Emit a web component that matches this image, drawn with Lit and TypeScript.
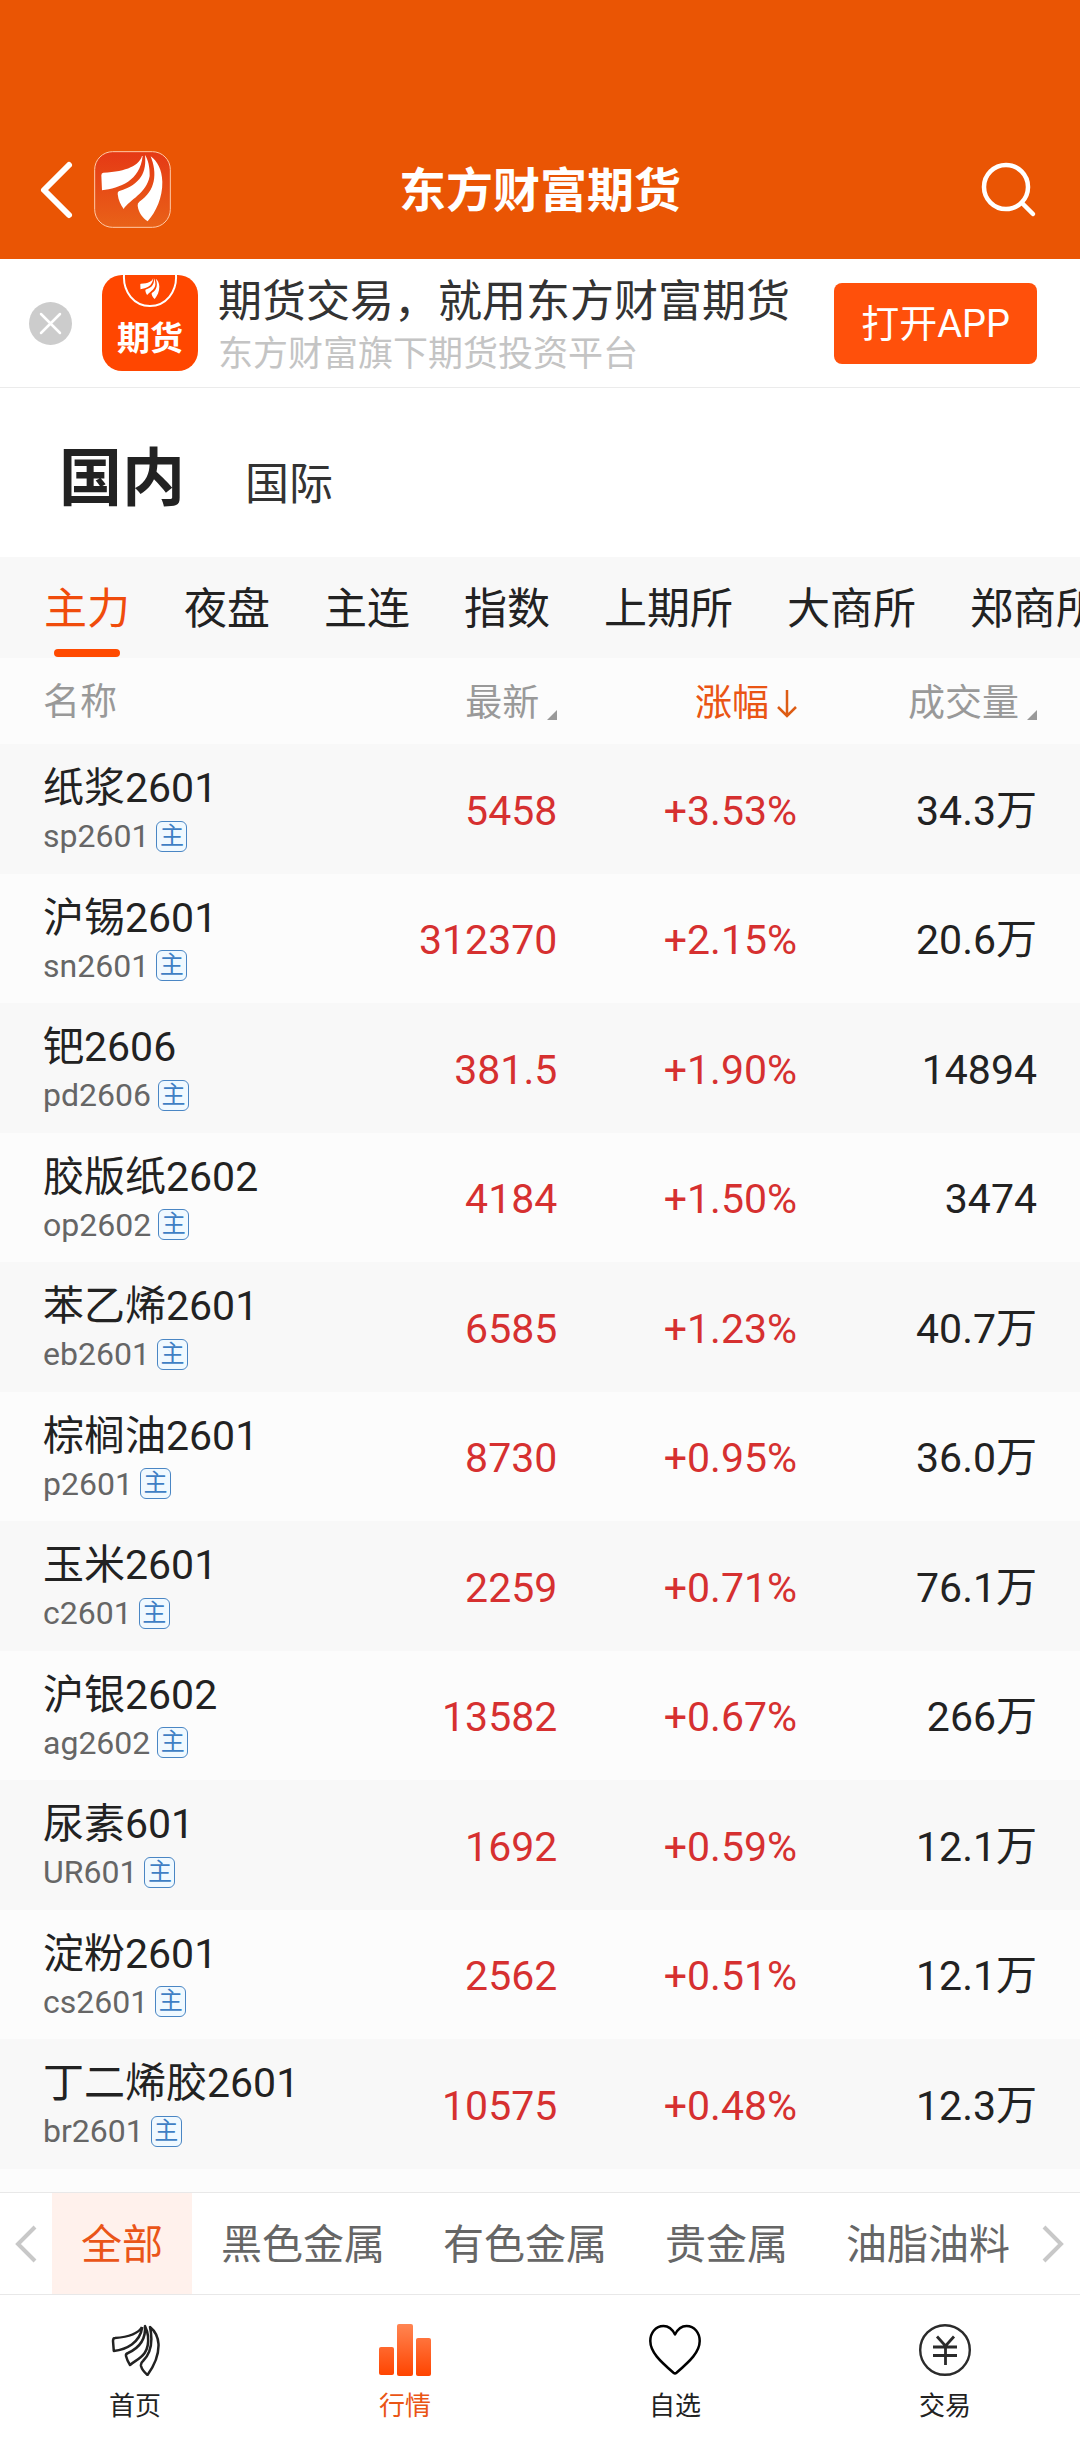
import { LitElement, html, svg, css } from "lit";
import { customElement, state } from "lit/decorators.js";

interface Quote {
  name: string;
  code: string;
  last: string;
  change: string;
  volume: string;
}

const QUOTES: Quote[] = [
  { name: "纸浆2601", code: "sp2601", last: "5458", change: "+3.53%", volume: "34.3万" },
  { name: "沪锡2601", code: "sn2601", last: "312370", change: "+2.15%", volume: "20.6万" },
  { name: "钯2606", code: "pd2606", last: "381.5", change: "+1.90%", volume: "14894" },
  { name: "胶版纸2602", code: "op2602", last: "4184", change: "+1.50%", volume: "3474" },
  { name: "苯乙烯2601", code: "eb2601", last: "6585", change: "+1.23%", volume: "40.7万" },
  { name: "棕榈油2601", code: "p2601", last: "8730", change: "+0.95%", volume: "36.0万" },
  { name: "玉米2601", code: "c2601", last: "2259", change: "+0.71%", volume: "76.1万" },
  { name: "沪银2602", code: "ag2602", last: "13582", change: "+0.67%", volume: "266万" },
  { name: "尿素601", code: "UR601", last: "1692", change: "+0.59%", volume: "12.1万" },
  { name: "淀粉2601", code: "cs2601", last: "2562", change: "+0.51%", volume: "12.1万" },
  { name: "丁二烯胶2601", code: "br2601", last: "10575", change: "+0.48%", volume: "12.3万" },
];

const BOARDS = ["主力", "夜盘", "主连", "指数", "上期所", "大商所", "郑商所"];
const SECTORS = ["全部", "黑色金属", "有色金属", "贵金属", "油脂油料"];

// Three petals of the brand mark, on a 231-unit square.
const petals = svg`
  <path d="M144 15C136 42 100 62 28 65Q22 66 22 73L24 118C78 111 138 90 146 15Z"/>
  <path d="M153 12C158 62 142 100 76 120Q70 122 71 129C73 148 80 162 89 174C106 146 158 128 167 75C168 48 162 26 153 12Z"/>
  <path d="M170 16C190 66 186 120 136 152Q130 157 131 164C134 186 146 200 161 211C186 182 206 140 205 92C204 56 190 30 170 16Z"/>
`;

const homeIcon = html`<svg class="nav-icon" viewBox="0 0 52 52" fill="none" stroke="#222" stroke-width="2.500" stroke-linejoin="round" aria-hidden="true">
  <path d="M33 3C29 10 20 13 6 14Q4 14 4 17L4.800 27C17 25.500 31 19 33.300 3"/>
  <path d="M36 2C37 15 30 24 19 29Q16.500 30 17 32C18 36 19 38 21 41C27 35 41 33 39 12C38.500 8 37.500 5 36 2Z"/>
  <path d="M41 3C44 17 43 28 34 37Q31.500 39 32 42C33 46 35 48 38.500 51C45 42 50 32 49.500 20C49 13 46 7 41 3Z"/>
</svg>`;

const marketIcon = html`<svg class="nav-icon" viewBox="0 0 52 52" aria-hidden="true">
  <defs><linearGradient id="bars" x1="0" y1="0" x2="0" y2="52" gradientUnits="userSpaceOnUse">
    <stop offset="0" stop-color="#ff8552"/><stop offset="1" stop-color="#ff4400"/></linearGradient></defs>
  <g fill="url(#bars)"><rect x="0" y="23" width="15" height="28" rx="2"/><rect x="18" y="0" width="16" height="52" rx="2"/><rect x="37" y="14" width="15" height="38" rx="2"/></g>
</svg>`;

const heartIcon = html`<svg class="nav-icon" viewBox="0 0 52 52" fill="none" stroke="#000" stroke-width="2.500" stroke-linejoin="round" aria-hidden="true">
  <path d="M26 10.500C23 4.500 18.500 2 14.500 2C6.500 2 1.300 9 1.300 17C1.300 28 11 37 24.500 48.800Q26 50 27.500 48.800C41 37 50.700 28 50.700 17C50.700 9 45.500 2 37.500 2C33.500 2 29 4.500 26 10.500Z"/>
</svg>`;

const tradeIcon = html`<svg class="nav-icon" viewBox="0 0 52 52" fill="none" stroke="#2b2b2b" stroke-width="2.400" aria-hidden="true">
  <circle cx="26" cy="26" r="24.800"/>
  <path d="M18 12.500L26.500 22L35 12.500M14 23H38M14 31.500H38M26.500 22V41" stroke-width="2.800"/>
</svg>`;

const NAV = [
  { label: "首页", icon: homeIcon },
  { label: "行情", icon: marketIcon },
  { label: "自选", icon: heartIcon },
  { label: "交易", icon: tradeIcon },
];

@customElement("app-root")
export class AppRoot extends LitElement {
  @state() private board = "主力";
  @state() private sector = "全部";
  @state() private page = "行情";
  @state() private showPromo = true;

  static styles = css`
    :host {
      display: flex;
      flex-direction: column;
      min-height: 100vh;
      background: #fff;
      color: #222;
      font-family: Roboto, "Noto Sans CJK SC", sans-serif;
      font-size: 41px;
      line-height: 48px;
      overflow: hidden;
    }
    * { box-sizing: border-box; }
    button, a {
      font: inherit;
      color: inherit;
      background: none;
      border: 0;
      margin: 0;
      padding: 0;
      text-decoration: none;
      white-space: nowrap;
      cursor: pointer;
    }
    svg { display: block; }
    h1, p { margin: 0; }

    .header {
      display: grid;
      grid-template-columns: 1fr auto 1fr;
      align-items: center;
      padding: 120px 38px 0;
      height: 259px;
      background: #ea5504;
      color: #fff;
    }
    .header-left { display: flex; align-items: center; gap: 20px; }
    .title { padding-top: 2px; font-size: 47px; font-weight: 700; line-height: 56px; }
    .search { justify-self: end; }

    .promo {
      display: flex;
      align-items: center;
      height: 129px;
      padding: 0 43px 0 29px;
      border-bottom: 1px solid #ebebeb;
    }
    .promo-logo { margin: 0 20px 0 30px; border-radius: 20px; }
    .promo-copy { flex: 1; min-width: 0; padding-top: 4px; white-space: nowrap; }
    .promo-title { font-size: 44px; line-height: 60px; color: #333; }
    .promo-sub { font-size: 35px; line-height: 46px; color: #c4c4c4; }
    .open-app {
      padding: 2px 27px 0;
      border-radius: 8px;
      background: #ff500b;
      color: #fff;
      font-size: 38px;
      line-height: 79px;
    }

    .markets {
      display: flex;
      align-items: baseline;
      gap: 60px;
      height: 169px;
      padding: 47px 59px 0;
      font-size: 44px;
      color: #333;
    }
    .markets .current { font-size: 63px; line-height: 88px; font-weight: 700; color: #222; }

    .boards {
      display: flex;
      gap: 54px;
      padding: 0 44px;
      overflow: hidden;
      background: #f8f8f8;
      font-size: 43px;
    }
    .board {
      display: flex;
      flex: none;
      flex-direction: column;
      align-items: center;
      height: 101px;
    }
    .board span { height: 92px; padding-top: 6px; line-height: 92px; }
    .board.current { color: #f04c0c; }
    .board.current::after {
      content: "";
      flex: none;
      width: 66px;
      height: 8px;
      border-radius: 4px;
      background: #ff4a00;
    }

    .list { flex: 1; background: #fcfcfc; }
    .quotes { width: 100%; table-layout: fixed; border-collapse: collapse; }
    .col-name { width: 30%; }
    .col-last { width: 21.6%; }
    .col-change { width: 22.2%; }
    th, td { padding: 3px 0 0; text-align: right; font-weight: 400; }
    th:first-child, td:first-child { padding-left: 43px; text-align: left; white-space: nowrap; }
    th:last-child, td:last-child { padding-right: 43px; }
    thead th { height: 86px; padding-top: 4px; font-size: 37px; color: #999; }
    .sort { display: inline-flex; align-items: center; gap: 8px; vertical-align: middle; }
    .sort.active { color: #ea5514; }
    .sort .corner { margin-top: 22px; }
    tbody tr { height: 129px; }
    tbody tr:nth-child(odd) { height: 130px; background: #f8f8f8; }
    .name { display: block; padding-top: 3px; }
    .sub { display: flex; align-items: center; gap: 7px; font-size: 32px; line-height: 48px; color: #666; }
    .badge {
      width: 31px;
      height: 31px;
      border: 1px solid #4a86c4;
      border-radius: 6px;
      background: #f0f9ff;
      color: #3f7fc4;
      font-size: 24px;
      line-height: 28px;
      text-align: center;
    }
    .rise { color: #d63030; }

    .sectors {
      display: flex;
      height: 103px;
      border-top: 1px solid #e8e8e8;
      border-bottom: 1px solid #e8e8e8;
      color: #666;
    }
    .sector-track { display: flex; flex: 1; min-width: 0; overflow: hidden; }
    .sector { flex: none; padding: 2px 29px 0; }
    .sector.current { background: #fff1ec; color: #ea5518; }
    .step { display: flex; align-items: center; justify-content: center; width: 52px; }
    .step.next { width: 38px; justify-content: flex-start; }

    .nav { display: grid; grid-template-columns: repeat(4, 1fr); height: 145px; }
    .nav-item {
      display: flex;
      flex-direction: column;
      align-items: center;
      gap: 14px;
      padding-top: 29px;
      font-size: 26px;
      line-height: 32px;
    }
    .nav-item.current { color: #ea5514; }
    .nav-icon { width: 52px; height: 52px; }
  `;

  private corner() {
    return html`<svg class="corner" width="10" height="10" viewBox="0 0 10 10" aria-hidden="true"><path d="M10 0V10H0Z" fill="#999"/></svg>`;
  }

  private renderPromo() {
    return html`<section class="promo">
      <button aria-label="关闭" @click=${() => (this.showPromo = false)}>
        <svg width="43" height="43" viewBox="0 0 43 43"><circle cx="21.500" cy="21.500" r="21.500" fill="#ccc"/><path d="M12 12L31 31M31 12L12 31" stroke="#fff" stroke-width="2.500" stroke-linecap="round"/></svg>
      </button>
      <svg class="promo-logo" width="96" height="96" viewBox="0 0 96 96" aria-hidden="true">
        <rect width="96" height="96" fill="#ff4600"/>
        <path d="M22 0C21 17 32 31 48 31S75 17 74 0" fill="none" stroke="#fff" stroke-width="2"/>
        <g fill="#fff" transform="translate(36 2) scale(.104)">${petals}</g>
        <text x="48" y="75" text-anchor="middle" fill="#fff" font-family="Noto Sans CJK SC" font-weight="700" font-size="33">期货</text>
      </svg>
      <div class="promo-copy">
        <p class="promo-title">期货交易，就用东方财富期货</p>
        <p class="promo-sub">东方财富旗下期货投资平台</p>
      </div>
      <button class="open-app">打开APP</button>
    </section>`;
  }

  render() {
    return html`
      <header class="header">
        <div class="header-left">
          <button aria-label="返回">
            <svg width="36" height="60" viewBox="0 0 36 60" fill="none" stroke="#fff" stroke-width="6" stroke-linecap="round" stroke-linejoin="round"><path d="M31 5L6 30L31 55"/></svg>
          </button>
          <a href="#home" aria-label="东方财富">
            <svg width="77" height="77" viewBox="0 0 231 231">
              <defs><linearGradient id="tile" x1="0" y1="0" x2="0" y2="1"><stop offset="0" stop-color="#e53915"/><stop offset="1" stop-color="#e96218"/></linearGradient></defs>
              <rect x="2" y="2" width="227" height="227" rx="54" fill="url(#tile)" stroke="#ffc9a6" stroke-width="3"/>
              <g fill="#fff">${petals}</g>
            </svg>
          </a>
        </div>
        <h1 class="title">东方财富期货</h1>
        <button class="search" aria-label="搜索">
          <svg width="61" height="56" viewBox="0 0 61 56" fill="none" stroke="#fff" stroke-width="4.500" stroke-linecap="round"><circle cx="25" cy="25" r="22"/><path d="M41 41L52 52"/></svg>
        </button>
      </header>

      ${this.showPromo ? this.renderPromo() : null}

      <nav class="markets">
        <a class="current" href="#domestic">国内</a>
        <a href="#international">国际</a>
      </nav>

      <nav class="boards">
        ${BOARDS.map(
          (b) => html`<button class="board ${b === this.board ? "current" : ""}" @click=${() => (this.board = b)}><span>${b}</span></button>`
        )}
      </nav>

      <main class="list">
        <table class="quotes">
          <colgroup><col class="col-name" /><col class="col-last" /><col class="col-change" /><col /></colgroup>
          <thead>
            <tr>
              <th scope="col">名称</th>
              <th scope="col"><button class="sort">最新${this.corner()}</button></th>
              <th scope="col"><button class="sort active">涨幅<svg width="20" height="28" viewBox="0 0 20 28" fill="none" stroke="#dd5c14" stroke-width="2.500" aria-hidden="true"><path d="M10 0V26M1 17L10 26L19 17"/></svg></button></th>
              <th scope="col"><button class="sort">成交量${this.corner()}</button></th>
            </tr>
          </thead>
          <tbody>
            ${QUOTES.map(
              (q) => html`<tr>
                <td><span class="name">${q.name}</span><span class="sub">${q.code}<span class="badge">主</span></span></td>
                <td class="rise">${q.last}</td>
                <td class="rise">${q.change}</td>
                <td>${q.volume}</td>
              </tr>`
            )}
          </tbody>
        </table>
      </main>

      <section class="sectors">
        <button class="step" aria-label="上一组"><svg width="22" height="38" viewBox="0 0 22 38" fill="none" stroke="#c8c8c8" stroke-width="4"><path d="M20 2L3 19L20 36"/></svg></button>
        <div class="sector-track">
          ${SECTORS.map(
            (s) => html`<button class="sector ${s === this.sector ? "current" : ""}" @click=${() => (this.sector = s)}>${s}</button>`
          )}
        </div>
        <button class="step next" aria-label="下一组"><svg width="22" height="38" viewBox="0 0 22 38" fill="none" stroke="#c8c8c8" stroke-width="4"><path d="M2 2L19 19L2 36"/></svg></button>
      </section>

      <nav class="nav">
        ${NAV.map(
          (n) => html`<a class="nav-item ${n.label === this.page ? "current" : ""}" href="#${n.label}" @click=${() => (this.page = n.label)}>${n.icon}<span>${n.label}</span></a>`
        )}
      </nav>
    `;
  }
}
